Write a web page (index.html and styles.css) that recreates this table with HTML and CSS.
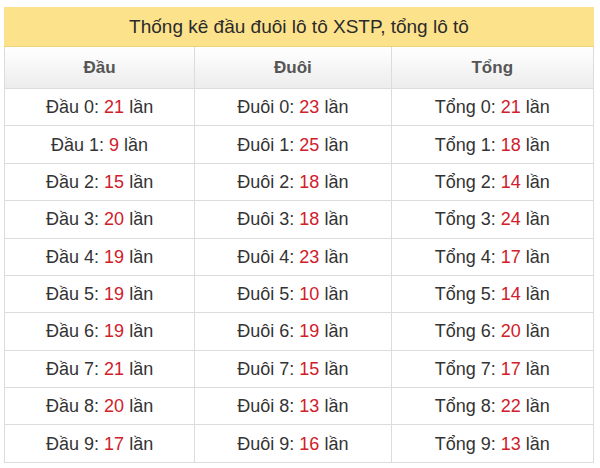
FILE: index.html
```html
<!DOCTYPE html>
<html lang="vi">
<head>
<meta charset="utf-8">
<link rel="stylesheet" href="styles.css">
</head>
<body>
<div class="wrap">
  <div class="title">Thống kê đầu đuôi lô tô XSTP, tổng lô tô</div>
  <table class="stats">
    <thead>
      <tr><th>Đầu</th><th>Đuôi</th><th>Tổng</th></tr>
    </thead>
    <tbody>
      <tr><td>Đầu 0: <span class="n">21</span> lần</td><td>Đuôi 0: <span class="n">23</span> lần</td><td>Tổng 0: <span class="n">21</span> lần</td></tr>
      <tr><td>Đầu 1: <span class="n">9</span> lần</td><td>Đuôi 1: <span class="n">25</span> lần</td><td>Tổng 1: <span class="n">18</span> lần</td></tr>
      <tr><td>Đầu 2: <span class="n">15</span> lần</td><td>Đuôi 2: <span class="n">18</span> lần</td><td>Tổng 2: <span class="n">14</span> lần</td></tr>
      <tr><td>Đầu 3: <span class="n">20</span> lần</td><td>Đuôi 3: <span class="n">18</span> lần</td><td>Tổng 3: <span class="n">24</span> lần</td></tr>
      <tr><td>Đầu 4: <span class="n">19</span> lần</td><td>Đuôi 4: <span class="n">23</span> lần</td><td>Tổng 4: <span class="n">17</span> lần</td></tr>
      <tr><td>Đầu 5: <span class="n">19</span> lần</td><td>Đuôi 5: <span class="n">10</span> lần</td><td>Tổng 5: <span class="n">14</span> lần</td></tr>
      <tr><td>Đầu 6: <span class="n">19</span> lần</td><td>Đuôi 6: <span class="n">19</span> lần</td><td>Tổng 6: <span class="n">20</span> lần</td></tr>
      <tr><td>Đầu 7: <span class="n">21</span> lần</td><td>Đuôi 7: <span class="n">15</span> lần</td><td>Tổng 7: <span class="n">17</span> lần</td></tr>
      <tr><td>Đầu 8: <span class="n">20</span> lần</td><td>Đuôi 8: <span class="n">13</span> lần</td><td>Tổng 8: <span class="n">22</span> lần</td></tr>
      <tr><td>Đầu 9: <span class="n">17</span> lần</td><td>Đuôi 9: <span class="n">16</span> lần</td><td>Tổng 9: <span class="n">13</span> lần</td></tr>
    </tbody>
  </table>
</div>
</body>
</html>
```

FILE: styles.css
```css
html, body {
  margin: 0;
  padding: 0;
  background: #fff;
}
body {
  font-family: "Liberation Sans", Arial, sans-serif;
  color: #333;
}
.wrap {
  padding: 7px 6px 0 4px;
}
.title {
  background: #fde28c;
  border-bottom: 1px solid #f0d27a;
  height: 39px;
  line-height: 39px;
  text-align: center;
  font-size: 19px;
  color: #2b2b2b;
}
.stats {
  width: 100%;
  border-collapse: collapse;
  font-size: 18px;
}
.stats th, .stats td {
  border: 1px solid #dcdcdc;
  text-align: center;
}
.stats thead th {
  border-top: none;
  background: linear-gradient(#ffffff, #ececec);
  color: #555;
  font-weight: bold;
  font-size: 17px;
  line-height: 21px;
  padding: 10px 8px;
}
.stats td {
  padding: 8.2px 8px;
  line-height: 20px;
  color: #333;
}
.n {
  color: #d0202a;
}
```
